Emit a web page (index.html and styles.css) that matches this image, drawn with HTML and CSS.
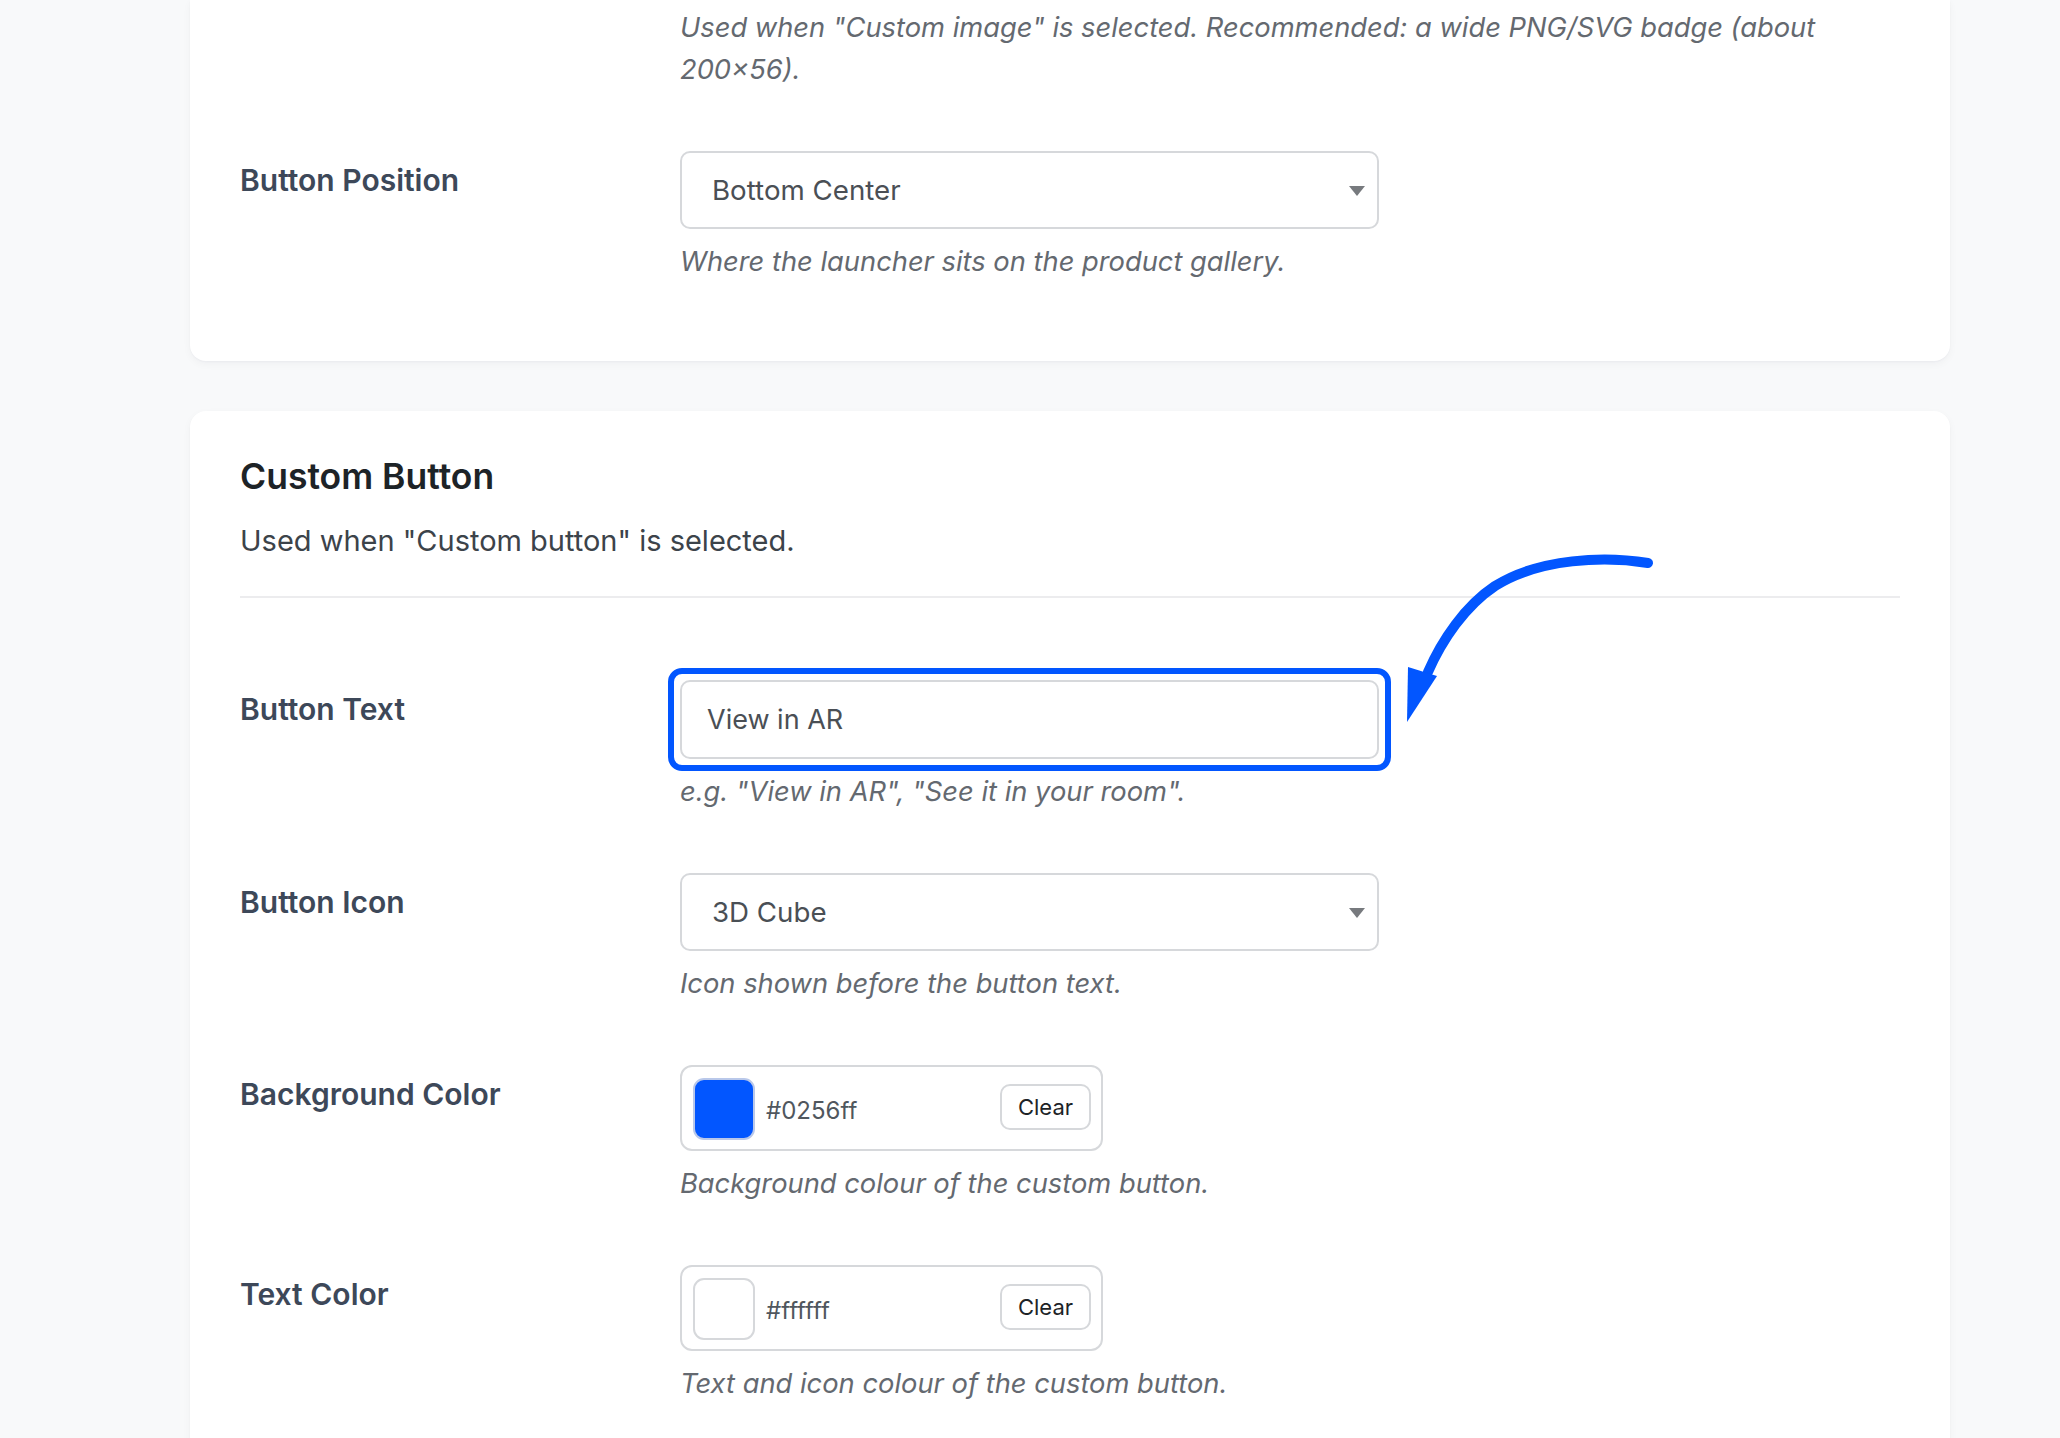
FILE: index.html
```html
<!DOCTYPE html>
<html lang="en">
<head>
<meta charset="utf-8">
<title>AR Button Settings</title>
<link rel="stylesheet" href="styles.css">
</head>
<body>
<main class="page">

  <section class="card card--cut">
    <div class="row row--cut">
      <div class="row-label"></div>
      <div class="row-field">
        <p class="help">Used when "Custom image" is selected. Recommended: a wide PNG/SVG badge (about 200×56).</p>
      </div>
    </div>
    <div class="row">
      <label class="row-label" for="launcher-position">Button Position</label>
      <div class="row-field">
        <div class="select">
          <span class="select-value" id="launcher-position">Bottom Center</span>
          <span class="select-caret"></span>
        </div>
        <p class="help">Where the launcher sits on the product gallery.</p>
      </div>
    </div>
  </section>

  <section class="card card--custom">
    <h2 class="card-title">Custom Button</h2>
    <p class="card-desc">Used when "Custom button" is selected.</p>
    <hr class="card-rule">

    <div class="rows">
      <div class="row">
        <label class="row-label" for="btn-text">Button Text</label>
        <div class="row-field">
          <div class="field-wrap">
            <input class="text-input" id="btn-text" type="text" value="View in AR">
            <span class="focus-ring"></span>
          </div>
          <p class="help">e.g. "View in AR", "See it in your room".</p>
        </div>
      </div>

      <div class="row">
        <label class="row-label" for="btn-icon">Button Icon</label>
        <div class="row-field">
          <div class="select">
            <span class="select-value" id="btn-icon">3D Cube</span>
            <span class="select-caret"></span>
          </div>
          <p class="help">Icon shown before the button text.</p>
        </div>
      </div>

      <div class="row">
        <label class="row-label">Background Color</label>
        <div class="row-field">
          <div class="color-picker">
            <span class="swatch swatch--blue"></span>
            <span class="color-hex">#0256ff</span>
            <button class="clear-btn" type="button">Clear</button>
          </div>
          <p class="help">Background colour of the custom button.</p>
        </div>
      </div>

      <div class="row">
        <label class="row-label">Text Color</label>
        <div class="row-field">
          <div class="color-picker">
            <span class="swatch swatch--white"></span>
            <span class="color-hex">#ffffff</span>
            <button class="clear-btn" type="button">Clear</button>
          </div>
          <p class="help">Text and icon colour of the custom button.</p>
        </div>
      </div>
    </div>

    <svg class="callout-arrow" width="280" height="200" viewBox="0 0 280 200" aria-hidden="true">
      <path d="M258 23 C215 16 150 18 105 46 C75 66 52 100 38 132" fill="none" stroke="#0256ff" stroke-width="10" stroke-linecap="round"/>
      <polygon points="18,127 47,136 17,182" fill="#0256ff"/>
    </svg>
  </section>

</main>
</body>
</html>
```

FILE: styles.css
```css
html {
  overflow: hidden;
}

body {
  margin: 0;
  background: #f8f9fa;
  font-family: Inter, "Noto Sans", "Liberation Sans", sans-serif;
  color: #3c434a;
}

.page {
  width: 1760px;
  padding-left: 190px;
}

/* Settings cards */
.card {
  position: relative;
  background: #ffffff;
  border-radius: 16px;
  box-shadow: 0 3px 8px rgba(20, 30, 50, 0.04), 0 1px 2px rgba(20, 30, 50, 0.03);
  padding: 44px 50px 48px;
}

.card--cut {
  border-top-left-radius: 0;
  border-top-right-radius: 0;
  padding-top: 0;
}

.card + .card {
  margin-top: 50px;
}

.card-title {
  margin: 0;
  font-size: 35.5px;
  line-height: 44px;
  font-weight: 600;
  color: #1d2327;
}

.card-desc {
  margin: 22px 0 0;
  font-size: 29px;
  line-height: 40px;
  color: #3c434a;
}

.card-rule {
  margin: 35px 0 0;
  border: 0;
  height: 2px;
  background: #ececee;
}

.rows {
  margin-top: 52px;
}

/* Form rows: label column + field column */
.row {
  display: grid;
  grid-template-columns: 440px 1fr;
  padding: 30px 0;
}

.row--cut {
  padding-top: 7px;
}

.row-label {
  padding-top: 11px;
  font-size: 30px;
  line-height: 36px;
  font-weight: 600;
  color: #3d4859;
}

.row-field {
  min-width: 0;
}

.help {
  margin: 12px 0 0;
  font-size: 27.3px;
  line-height: 42px;
  font-style: italic;
  color: #646970;
}

.row--cut .help {
  margin-top: 0;
}

/* Dropdowns */
.select {
  box-sizing: border-box;
  width: 699px;
  height: 78px;
  display: flex;
  align-items: center;
  justify-content: space-between;
  padding: 0 12px 0 30px;
  border: 2px solid #d6d8db;
  border-radius: 10px;
  background: #fff;
}

.select-value {
  font-size: 27.7px;
  color: #4a4f55;
}

.select-caret {
  width: 0;
  height: 0;
  border-left: 8px solid transparent;
  border-right: 8px solid transparent;
  border-top: 10px solid #777a7e;
  margin-top: 2px;
}

/* Text input with highlighted focus ring */
.field-wrap {
  position: relative;
  width: 699px;
}

.text-input {
  box-sizing: border-box;
  display: block;
  width: 699px;
  height: 79px;
  padding: 0 25px;
  border: 2px solid #d6d8db;
  border-radius: 10px;
  background: #fff;
  font-family: inherit;
  font-size: 27px;
  color: #4a4f55;
  outline: none;
}

.focus-ring {
  position: absolute;
  inset: -12px -12px -12px -12px;
  border: 6px solid #0256ff;
  border-radius: 14px;
  pointer-events: none;
}

/* Colour pickers */
.color-picker {
  box-sizing: border-box;
  width: 423px;
  height: 86px;
  display: flex;
  align-items: center;
  padding: 0 10px 0 11px;
  border: 2px solid #d6d8db;
  border-radius: 12px;
  background: #fff;
}

.swatch {
  box-sizing: border-box;
  flex: none;
  width: 62px;
  height: 62px;
  border-radius: 11px;
  margin-top: 2px;
}

.swatch--blue {
  background: #0256ff;
  border: 2px solid #b9c8ea;
}

.swatch--white {
  background: #fff;
  border: 2px solid #d6d8db;
}

.color-hex {
  flex: 1;
  margin-left: 11px;
  margin-top: 4px;
  font-size: 24px;
  color: #50575e;
}

.clear-btn {
  box-sizing: border-box;
  width: 91px;
  height: 46px;
  margin-top: -3px;
  padding: 0;
  border: 2px solid #d6d8db;
  border-radius: 10px;
  background: #fff;
  font-family: inherit;
  font-size: 22px;
  color: #1d2327;
}

/* Hand-drawn pointer toward the Button Text field */
.callout-arrow {
  position: absolute;
  left: 1200px;
  top: 129px;
}
```
